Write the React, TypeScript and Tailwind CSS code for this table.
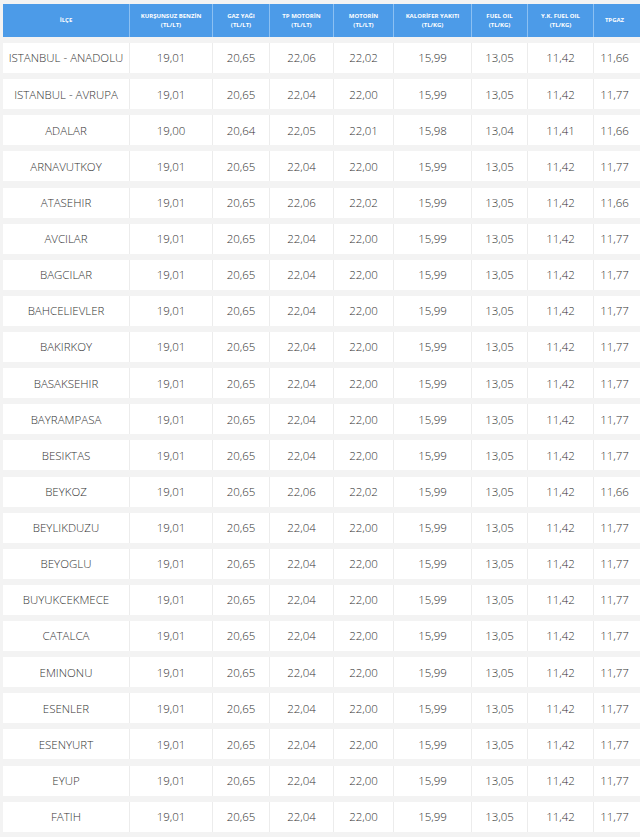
import React from 'react';

const headers = [
  ['İLÇE'],
  ['KURŞUNSUZ BENZİN', '(TL/LT)'],
  ['GAZ YAĞI', '(TL/LT)'],
  ['TP MOTORİN', '(TL/LT)'],
  ['MOTORİN', '(TL/LT)'],
  ['KALORİFER YAKITI', '(TL/KG)'],
  ['FUEL OIL', '(TL/KG)'],
  ['Y.K. FUEL OIL', '(TL/KG)'],
  ['TPGAZ'],
];

const rows: string[][] = [
  ['ISTANBUL - ANADOLU', '19,01', '20,65', '22,06', '22,02', '15,99', '13,05', '11,42', '11,66'],
  ['ISTANBUL - AVRUPA', '19,01', '20,65', '22,04', '22,00', '15,99', '13,05', '11,42', '11,77'],
  ['ADALAR', '19,00', '20,64', '22,05', '22,01', '15,98', '13,04', '11,41', '11,66'],
  ['ARNAVUTKOY', '19,01', '20,65', '22,04', '22,00', '15,99', '13,05', '11,42', '11,77'],
  ['ATASEHIR', '19,01', '20,65', '22,06', '22,02', '15,99', '13,05', '11,42', '11,66'],
  ['AVCILAR', '19,01', '20,65', '22,04', '22,00', '15,99', '13,05', '11,42', '11,77'],
  ['BAGCILAR', '19,01', '20,65', '22,04', '22,00', '15,99', '13,05', '11,42', '11,77'],
  ['BAHCELIEVLER', '19,01', '20,65', '22,04', '22,00', '15,99', '13,05', '11,42', '11,77'],
  ['BAKIRKOY', '19,01', '20,65', '22,04', '22,00', '15,99', '13,05', '11,42', '11,77'],
  ['BASAKSEHIR', '19,01', '20,65', '22,04', '22,00', '15,99', '13,05', '11,42', '11,77'],
  ['BAYRAMPASA', '19,01', '20,65', '22,04', '22,00', '15,99', '13,05', '11,42', '11,77'],
  ['BESIKTAS', '19,01', '20,65', '22,04', '22,00', '15,99', '13,05', '11,42', '11,77'],
  ['BEYKOZ', '19,01', '20,65', '22,06', '22,02', '15,99', '13,05', '11,42', '11,66'],
  ['BEYLIKDUZU', '19,01', '20,65', '22,04', '22,00', '15,99', '13,05', '11,42', '11,77'],
  ['BEYOGLU', '19,01', '20,65', '22,04', '22,00', '15,99', '13,05', '11,42', '11,77'],
  ['BUYUKCEKMECE', '19,01', '20,65', '22,04', '22,00', '15,99', '13,05', '11,42', '11,77'],
  ['CATALCA', '19,01', '20,65', '22,04', '22,00', '15,99', '13,05', '11,42', '11,77'],
  ['EMINONU', '19,01', '20,65', '22,04', '22,00', '15,99', '13,05', '11,42', '11,77'],
  ['ESENLER', '19,01', '20,65', '22,04', '22,00', '15,99', '13,05', '11,42', '11,77'],
  ['ESENYURT', '19,01', '20,65', '22,04', '22,00', '15,99', '13,05', '11,42', '11,77'],
  ['EYUP', '19,01', '20,65', '22,04', '22,00', '15,99', '13,05', '11,42', '11,77'],
  ['FATIH', '19,01', '20,65', '22,04', '22,00', '15,99', '13,05', '11,42', '11,77'],
];

const cols = 'grid grid-cols-[126px_83px_57px_64px_60px_78px_56px_66px_42px]';

const App: React.FC = () => {
  return (
    <div className="min-h-[837px] bg-[#f3f3f3] pl-[3px] pt-[4px] font-['Open_Sans',sans-serif]">
      {/* Header */}
      <div className={`${cols} h-[33px] bg-[#4c9be8]`}>
        {headers.map((h, i) => (
          <div
            key={i}
            className={`flex flex-col items-center justify-center text-center text-[6px] font-bold leading-[9px] text-white ${
              i > 0 ? 'border-l border-[#8cc0f2]' : ''
            }`}
          >
            {h.map((line, j) => (
              <span key={j}>{line}</span>
            ))}
          </div>
        ))}
      </div>

      {/* Rows */}
      <div className="mt-[6px] flex flex-col gap-[6.14px]">
        {rows.map((r, i) => (
          <div key={i} className={`${cols} h-[30px] bg-white`}>
            {r.map((c, j) => (
              <div
                key={j}
                className={`flex items-center justify-center text-[11.5px] font-light text-[#333] ${
                  j > 0 ? 'border-l border-[#ececec]' : ''
                }`}
              >
                {c}
              </div>
            ))}
          </div>
        ))}
      </div>
    </div>
  );
};

export default App;
